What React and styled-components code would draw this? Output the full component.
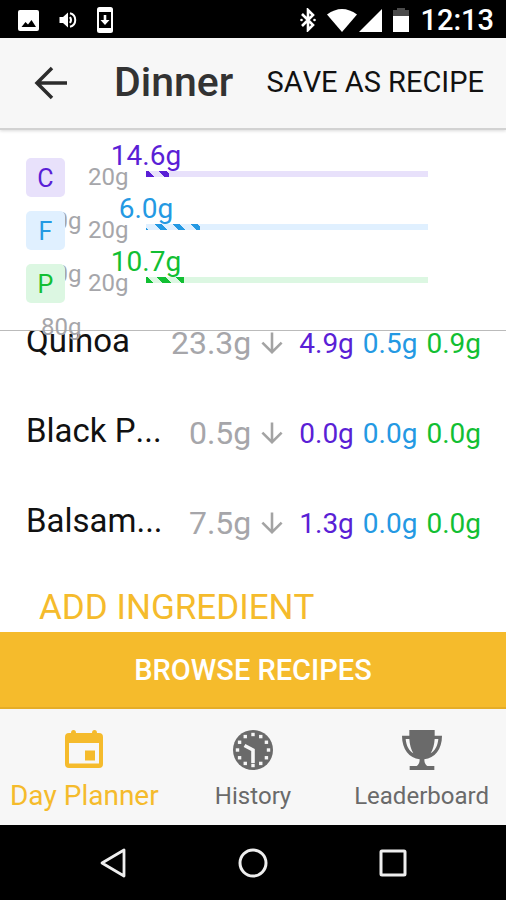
import React from "react";
import { createGlobalStyle, styled } from "styled-components";

const colors = {
  carbs: "#5a1fd6",
  carbsLight: "#e8e1fb",
  fat: "#2499e3",
  fatLight: "#e0f0ff",
  protein: "#12bf33",
  proteinLight: "#dcf7e2",
  accent: "#f5bb2c",
  grey: "#a6a6aa",
  bar: "#f7f7f7",
};

const GlobalStyle = createGlobalStyle`
  * {
    box-sizing: border-box;
  }
  body {
    margin: 0;
    background: #fff;
    font-family: Roboto, "Liberation Sans", sans-serif;
    font-kerning: none;
  }
  button {
    margin: 0;
    padding: 0;
    border: none;
    background: none;
    font-family: inherit;
    font-kerning: inherit;
    cursor: pointer;
  }
  svg {
    display: block;
    flex: none;
  }
`;

const Screen = styled.div`
  min-height: 100vh;
  display: flex;
  flex-direction: column;
  overflow: hidden;
`;

const StatusBar = styled.div`
  height: 38px;
  padding: 2px 12px 0 18px;
  display: flex;
  align-items: center;
  justify-content: space-between;
  background: #000;
  color: #fff;
`;

const StatusGroup = styled.div`
  display: flex;
  align-items: center;
  gap: ${(props) => props.$gap};
`;

const Clock = styled.span`
  font-size: 29px;
  line-height: 36px;
  font-weight: 500;
`;

const Header = styled.header`
  position: relative;
  z-index: 2;
  height: 92px;
  padding: 0 22px 4px 34px;
  display: flex;
  align-items: center;
  background: ${colors.bar};
  border-bottom: 2px solid #d2d2d2;
  box-shadow: 0 1px 3px rgba(0, 0, 0, 0.15);
`;

const BackButton = styled.button`
  padding-top: 4px;
`;

const Title = styled.h1`
  flex: 1;
  margin: 0 0 0 46px;
  padding-top: 2px;
  font-size: 41px;
  line-height: 48px;
  font-weight: 500;
  color: #333;
`;

const SaveButton = styled.button`
  padding-top: 2px;
  font-size: 29px;
  line-height: 32px;
  white-space: nowrap;
  color: #111;
`;

const MacroPanel = styled.section`
  position: relative;
  z-index: 1;
  padding: 28px 78px 13px 26px;
  display: flex;
  flex-direction: column;
  background: #fff;
  border-bottom: 1px solid #bbb;
`;

const MacroRow = styled.div`
  height: 53px;
  display: flex;
  align-items: flex-start;
`;

const BadgeColumn = styled.div`
  position: relative;
`;

const MacroBadge = styled.div`
  position: relative;
  width: 39px;
  height: 39px;
  border-radius: 5px;
  display: flex;
  align-items: center;
  justify-content: center;
  padding-top: 2px;
  font-size: 25px;
  background: ${(props) => props.$light};
  color: ${(props) => props.$color};
`;

const Limit = styled.div`
  width: 81px;
  padding: 5px 0 0 23px;
  font-size: 24px;
  line-height: 28px;
  color: ${colors.grey};
`;

// hangs under the badge and slides behind the next one
const UpperLimit = styled.span`
  position: absolute;
  top: 49px;
  left: 15px;
  font-size: 24px;
  line-height: 28px;
  color: ${colors.grey};
`;

const Track = styled.div`
  position: relative;
  flex: 1;
  height: 6px;
  margin-top: 13px;
  background: ${(props) => props.$light};
`;

const Fill = styled.div`
  height: 100%;
  background: ${({ $color, $light, $stripe }) => `repeating-linear-gradient(
    45deg,
    ${$color} 0 ${$stripe[0]}px,
    ${$light} ${$stripe[0]}px ${$stripe[1]}px,
    ${$color} ${$stripe[1]}px 13px
  )`};
`;

const Amount = styled.span`
  position: absolute;
  left: 0;
  bottom: 5px;
  transform: translateX(-50%);
  font-size: 28px;
  line-height: 32px;
  color: ${(props) => props.$color};
`;

const IngredientList = styled.ul`
  flex: 1;
  margin: -33px 0 0;
  padding: 0;
  list-style: none;
`;

const Ingredient = styled.li`
  height: 90px;
  padding: 0 25px 0 26px;
  display: flex;
  align-items: center;
`;

const Name = styled.span`
  flex: 1;
  padding-bottom: 4px;
  font-size: 33px;
  line-height: 40px;
  color: #111;
  white-space: nowrap;
`;

const Weight = styled.span`
  margin-right: 10px;
  font-size: 32px;
  line-height: 40px;
  color: ${colors.grey};
`;

const MacroValues = styled.div`
  margin-left: 16px;
  padding-top: 2px;
  display: flex;
  gap: 9px;
`;

const MacroValue = styled.span`
  font-size: 28px;
  line-height: 40px;
  color: ${(props) => props.$color};
`;

const AddButton = styled.button`
  display: block;
  height: 64px;
  padding: 20px 39px 4px;
  font-size: 35px;
  line-height: 40px;
  white-space: nowrap;
  color: ${colors.accent};
`;

const BrowseButton = styled.button`
  height: 77px;
  font-size: 29px;
  font-weight: 500;
  color: #fff;
  background: ${colors.accent};
  border-bottom: 2px solid #e5ad27;
`;

const Tabs = styled.nav`
  display: grid;
  grid-template-columns: 1fr 1fr 1fr;
  height: 116px;
  background: ${colors.bar};
`;

const Tab = styled.button`
  padding: 21px 0 13px;
  display: flex;
  flex-direction: column;
  align-items: center;
  justify-content: space-between;
  font-size: ${(props) => (props.$active ? "28px" : "24px")};
  line-height: 32px;
  white-space: nowrap;
  color: ${(props) => (props.$active ? colors.accent : "#6a6a6a")};
`;

const SystemNav = styled.nav`
  height: 75px;
  padding: 0 43px;
  display: flex;
  background: #000;
`;

const SystemButton = styled.button`
  flex: 1;
  display: flex;
  align-items: center;
  justify-content: center;
`;

const macros = [
  {
    letter: "C",
    label: "Carbs",
    amount: "14.6g",
    percent: 8,
    color: colors.carbs,
    light: colors.carbsLight,
    stripe: [6, 13],
  },
  {
    letter: "F",
    label: "Fat",
    amount: "6.0g",
    percent: 19,
    color: colors.fat,
    light: colors.fatLight,
    stripe: [2, 10],
  },
  {
    letter: "P",
    label: "Protein",
    amount: "10.7g",
    percent: 13.5,
    color: colors.protein,
    light: colors.proteinLight,
    stripe: [5, 12],
  },
];

const ingredients = [
  { name: "Quinoa", weight: "23.3g", carbs: "4.9g", fat: "0.5g", protein: "0.9g" },
  { name: "Black P...", weight: "0.5g", carbs: "0.0g", fat: "0.0g", protein: "0.0g" },
  { name: "Balsam...", weight: "7.5g", carbs: "1.3g", fat: "0.0g", protein: "0.0g" },
];

function PictureIcon() {
  return (
    <svg width="21" height="21" viewBox="0 0 21 21">
      <rect width="21" height="21" rx="2" fill="#fff" />
      <path d="M3.500 17L7.500 12L10 14.500L13.500 10L18 17Z" fill="#000" />
    </svg>
  );
}

function VolumeIcon() {
  return (
    <svg width="18" height="18" viewBox="0 0 18 18">
      <path d="M0.500 6H4L9 1.500V16.500L4 12H0.500Z" fill="#fff" />
      <path
        d="M11 6Q13 9 11 12M11 2.200C18 4 18 14 11 15.800"
        fill="none"
        stroke="#fff"
        strokeWidth="2"
      />
    </svg>
  );
}

function UpdateIcon() {
  return (
    <svg width="16" height="26" viewBox="0 0 16 26">
      <rect width="16" height="26" rx="2.500" fill="#fff" />
      <rect x="2" y="5" width="12" height="16" fill="#000" />
      <path d="M6.700 8H9.300V13H12.500L8 18L3.500 13H6.700Z" fill="#fff" />
    </svg>
  );
}

function BluetoothIcon() {
  return (
    <svg width="16" height="24" viewBox="0 0 16 24">
      <path
        d="M2 6L13 17L8 22V2L13 7L2 18"
        fill="none"
        stroke="#fff"
        strokeWidth="2.600"
      />
      <circle cx="1.500" cy="12" r="1.300" fill="#fff" />
      <circle cx="14.500" cy="12" r="1.300" fill="#fff" />
    </svg>
  );
}

function WifiIcon() {
  return (
    <svg width="30" height="23" viewBox="0 0 30 23">
      <path d="M0 5.500Q15 -5.500 30 5.500L15 23Z" fill="#fff" />
    </svg>
  );
}

function SignalIcon() {
  return (
    <svg width="23" height="23" viewBox="0 0 23 23">
      <path d="M23 0V23H0Z" fill="#fff" />
    </svg>
  );
}

function BatteryIcon() {
  return (
    <svg width="16" height="24" viewBox="0 0 16 24">
      <path d="M4 0H12V2H16V9H0V2H4Z" fill="#4b4b4b" />
      <path d="M0 8H16V24H0Z" fill="#fff" />
    </svg>
  );
}

function BackIcon() {
  return (
    <svg width="34" height="34" viewBox="0 0 34 34">
      <path
        d="M18 2L3 17L18 32M3 17H33"
        fill="none"
        stroke="#2c2c2c"
        strokeWidth="3.500"
      />
    </svg>
  );
}

function DownIcon() {
  return (
    <svg width="22" height="22" viewBox="0 0 24 24">
      <path
        d="M12 0.500V22M1.500 11.500L12 22L22.500 11.500"
        fill="none"
        stroke="#a3a3a3"
        strokeWidth="2.800"
      />
    </svg>
  );
}

function CalendarIcon() {
  return (
    <svg width="38" height="38" viewBox="0 0 38 38" fill={colors.accent}>
      <path
        fillRule="evenodd"
        d="M4 3H6Q6 0 8.500 0Q11 0 11 3H27Q27 0 29.500 0Q32 0 32 3H34Q38 3 38 7V34Q38 38 34 38H4Q0 38 0 34V7Q0 3 4 3ZM4 13V33.500H34V13Z"
      />
      <rect x="20" y="20.500" width="10" height="10" />
    </svg>
  );
}

function HistoryIcon() {
  const dots = [0, 1, 2, 3, 4, 5, 6, 7, 8, 9, 10, 11];
  return (
    <svg width="40" height="40" viewBox="0 0 40 40">
      <circle cx="20" cy="20" r="20" fill="#6a6a6a" />
      {dots.map((i) => {
        const angle = (i * Math.PI) / 6;
        return (
          <rect
            key={i}
            x={20 + 15.5 * Math.sin(angle) - 1.7}
            y={20 - 15.5 * Math.cos(angle) - 1.7}
            width="3.400"
            height="3.400"
            fill={colors.bar}
          />
        );
      })}
      <path
        d="M20 33V20L11.500 15.500"
        fill="none"
        stroke={colors.bar}
        strokeWidth="3.600"
      />
    </svg>
  );
}

function TrophyIcon() {
  return (
    <svg width="40" height="40" viewBox="0 0 120 120">
      <path
        fill="#6a6a6a"
        fillRule="evenodd"
        d="M22 0H98V17H120C120 58 98 84 67 88C67 98 70 104 76 108H97V120H23V108H44C50 104 53 98 53 88C22 84 0 58 0 17H22ZM11 27C13 48 21 62 34 70C27 58 23 44 22 27ZM109 27H98C97 44 93 58 86 70C99 62 107 48 109 27Z"
      />
    </svg>
  );
}

function App() {
  return (
    <Screen>
      <GlobalStyle />
      <StatusBar>
        <StatusGroup $gap="20px">
          <PictureIcon />
          <VolumeIcon />
          <UpdateIcon />
        </StatusGroup>
        <StatusGroup $gap="11px">
          <BluetoothIcon />
          <StatusGroup $gap="2px">
            <WifiIcon />
            <SignalIcon />
          </StatusGroup>
          <BatteryIcon />
          <Clock>12:13</Clock>
        </StatusGroup>
      </StatusBar>

      <Header>
        <BackButton aria-label="Back">
          <BackIcon />
        </BackButton>
        <Title>Dinner</Title>
        <SaveButton>SAVE AS RECIPE</SaveButton>
      </Header>

      <MacroPanel>
        {macros.map((macro) => (
          <MacroRow key={macro.letter}>
            <BadgeColumn>
              <UpperLimit>80g</UpperLimit>
              <MacroBadge $color={macro.color} $light={macro.light}>
                {macro.letter}
              </MacroBadge>
            </BadgeColumn>
            <Limit>20g</Limit>
            <Track
              $light={macro.light}
              role="img"
              aria-label={`${macro.label} ${macro.amount}`}
            >
              <Fill
                $color={macro.color}
                $light={macro.light}
                $stripe={macro.stripe}
                style={{ width: `${macro.percent}%` }}
              />
              <Amount $color={macro.color}>{macro.amount}</Amount>
            </Track>
          </MacroRow>
        ))}
      </MacroPanel>

      <IngredientList>
        {ingredients.map((item) => (
          <Ingredient key={item.name}>
            <Name>{item.name}</Name>
            <Weight>{item.weight}</Weight>
            <DownIcon />
            <MacroValues>
              <MacroValue $color={colors.carbs}>{item.carbs}</MacroValue>
              <MacroValue $color={colors.fat}>{item.fat}</MacroValue>
              <MacroValue $color={colors.protein}>{item.protein}</MacroValue>
            </MacroValues>
          </Ingredient>
        ))}
        <li>
          <AddButton>ADD INGREDIENT</AddButton>
        </li>
      </IngredientList>

      <BrowseButton>BROWSE RECIPES</BrowseButton>

      <Tabs>
        <Tab $active>
          <CalendarIcon />
          Day Planner
        </Tab>
        <Tab>
          <HistoryIcon />
          History
        </Tab>
        <Tab>
          <TrophyIcon />
          Leaderboard
        </Tab>
      </Tabs>

      <SystemNav>
        <SystemButton aria-label="Back">
          <svg width="28" height="30" viewBox="0 0 28 30">
            <path
              d="M25 2V28L3 15Z"
              fill="none"
              stroke="#eee"
              strokeWidth="2.800"
              strokeLinejoin="round"
            />
          </svg>
        </SystemButton>
        <SystemButton aria-label="Home">
          <svg width="30" height="30" viewBox="0 0 30 30">
            <circle cx="15" cy="15" r="13" fill="none" stroke="#eee" strokeWidth="3" />
          </svg>
        </SystemButton>
        <SystemButton aria-label="Recent apps">
          <svg width="28" height="28" viewBox="0 0 28 28">
            <rect
              x="2"
              y="2"
              width="24"
              height="24"
              rx="1"
              fill="none"
              stroke="#eee"
              strokeWidth="3"
            />
          </svg>
        </SystemButton>
      </SystemNav>
    </Screen>
  );
}

export default App;
